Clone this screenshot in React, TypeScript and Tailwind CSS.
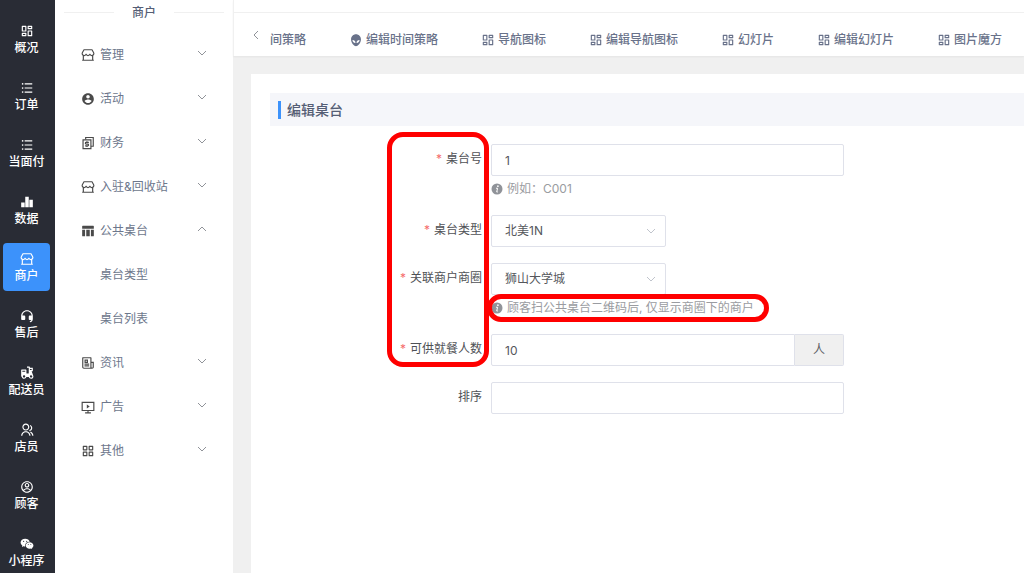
import React, { useState } from 'react';
import type { IconType } from 'react-icons';
import {
    RiAccountCircleFill,
    RiAccountCircleLine,
    RiAliensFill,
    RiBarChart2Fill,
    RiCustomerServiceFill,
    RiDashboardLine,
    RiEBike2Fill,
    RiFunctionLine,
    RiGroupLine,
    RiListUnordered,
    RiNewspaperLine,
    RiStore2Line,
    RiTableFill,
    RiWechatFill,
} from 'react-icons/ri';

type IconLike = IconType | React.FC<{ className?: string }>;

interface MenuGroup {
    label: string;
    icon: IconLike;
    children?: string[];
}

// Stacked bills with a dollar sign
const FinanceIcon: React.FC<{ className?: string }> = ({ className }) => (
    <svg viewBox="0 0 24 24" className={className} fill="none" stroke="currentColor" strokeWidth="2">
        <path d="M8 6V2.5h13v15h-4" />
        <path d="M3.5 6.5H17v15H3.5z" />
        <path d="M13.5 11H9a1.5 1.5 0 0 0 0 3h2.5a1.5 1.5 0 0 1 0 3H7M10.2 9v2M10.2 17v2" />
    </svg>
);

const ScreenIcon: React.FC<{ className?: string }> = ({ className }) => (
    <svg viewBox="0 0 24 24" className={className} fill="none" stroke="currentColor" strokeWidth="2">
        <path d="M2 4h20v14H2zM12 18v4M7 22h10" />
        <path d="M10 7.5v7l5-3.5z" fill="currentColor" stroke="none" />
    </svg>
);

const InfoIcon: React.FC<{ className?: string }> = ({ className }) => (
    <svg viewBox="0 0 24 24" className={className}>
        <circle cx="12" cy="12" r="11" fill="currentColor" />
        <circle cx="13.8" cy="6.4" r="1.7" fill="#fff" />
        <path d="M10 10.5h3.2l-1.8 7.5h2.2" fill="none" stroke="#fff" strokeWidth="2" />
    </svg>
);

const Chevron: React.FC<{ d: string; className?: string }> = ({ d, className }) => (
    <svg viewBox="0 0 10 10" className={`size-2.5 ${className ?? ''}`} fill="none" stroke="currentColor">
        <path d={d} />
    </svg>
);

const DOWN = 'M1 3l4 4 4-4';
const UP = 'M1 7l4-4 4 4';
const LEFT = 'M7 1L3 5l4 4';

const mainNav: { label: string; icon: IconLike }[] = [
    { label: '概况', icon: RiDashboardLine },
    { label: '订单', icon: RiListUnordered },
    { label: '当面付', icon: RiListUnordered },
    { label: '数据', icon: RiBarChart2Fill },
    { label: '商户', icon: RiStore2Line },
    { label: '售后', icon: RiCustomerServiceFill },
    { label: '配送员', icon: RiEBike2Fill },
    { label: '店员', icon: RiGroupLine },
    { label: '顾客', icon: RiAccountCircleLine },
    { label: '小程序', icon: RiWechatFill },
];

const menuGroups: MenuGroup[] = [
    { label: '管理', icon: RiStore2Line },
    { label: '活动', icon: RiAccountCircleFill },
    { label: '财务', icon: FinanceIcon },
    { label: '入驻&回收站', icon: RiStore2Line },
    { label: '公共桌台', icon: RiTableFill, children: ['桌台类型', '桌台列表'] },
    { label: '资讯', icon: RiNewspaperLine },
    { label: '广告', icon: ScreenIcon },
    { label: '其他', icon: RiFunctionLine },
];

const tabs: { label: string; icon?: IconLike }[] = [
    { label: '间策略' },
    { label: '编辑时间策略', icon: RiAliensFill },
    { label: '导航图标', icon: RiDashboardLine },
    { label: '编辑导航图标', icon: RiDashboardLine },
    { label: '幻灯片', icon: RiDashboardLine },
    { label: '编辑幻灯片', icon: RiDashboardLine },
    { label: '图片魔方', icon: RiDashboardLine },
];

const MainNav: React.FC = () => (
    <nav className="flex w-[55px] shrink-0 flex-col gap-[9px] overflow-hidden bg-[#292c35] pt-[15px] pr-[5px] pl-[3px]">
        {mainNav.map(({ label, icon: Icon }) => (
            <a
                key={label}
                href="#"
                className={`flex h-12 shrink-0 flex-col items-center rounded pt-[9px] text-xs leading-5 font-medium whitespace-nowrap text-white ${
                    label === '商户' ? 'bg-[#3c92fb]' : ''
                }`}
            >
                <Icon className="size-3.5 shrink-0" />
                {label}
            </a>
        ))}
    </nav>
);

const SideMenu: React.FC = () => {
    const [open, setOpen] = useState('公共桌台');

    return (
        <aside className="w-[178px] shrink-0 bg-white">
            <div className="flex h-[33px] items-start gap-[18px] px-[9px] pt-[3px] text-xs leading-5 font-medium text-[#555e75]">
                <span className="mt-[9px] h-px flex-1 bg-[#f0f0f0]" />
                商户
                <span className="mt-[9px] h-px flex-1 bg-[#f0f0f0]" />
            </div>
            <ul>
                {menuGroups.map(({ label, icon: Icon, children }) => (
                    <li key={label}>
                        <button
                            type="button"
                            onClick={() => setOpen(open === label ? '' : label)}
                            className="flex h-11 w-full items-center gap-[5px] px-[26px] text-xs text-[#6d778c]"
                        >
                            <Icon className="size-3.5 text-[#4a4a4a]" />
                            {label}
                            <Chevron d={open === label ? UP : DOWN} className="mb-1 ml-auto text-[#909399]" />
                        </button>
                        {open === label &&
                            children?.map((child) => (
                                <a key={child} href="#" className="flex h-11 items-center pl-[45px] text-xs text-[#6d778c]">
                                    {child}
                                </a>
                            ))}
                    </li>
                ))}
            </ul>
        </aside>
    );
};

const TabBar: React.FC = () => (
    <header className="border-l border-[#f0f0f0] bg-white shadow-xs">
        <div className="h-[13px] border-b border-[#f0f0f0]" />
        <div className="flex h-[43px] items-center overflow-hidden pl-[17px]">
            <button type="button" aria-label="向左" className="mr-[9px] shrink-0 text-[#909399]">
                <Chevron d={LEFT} />
            </button>
            <div className="flex gap-[43px] pt-2.5">
                {tabs.map(({ label, icon: Icon }) => (
                    <a
                        key={label}
                        href="#"
                        className="flex shrink-0 items-center gap-[3px] text-xs leading-5 font-medium whitespace-nowrap text-[#69728a]"
                    >
                        {Icon && <Icon className="size-3.5" />}
                        {label}
                    </a>
                ))}
            </div>
        </div>
    </header>
);

interface FieldProps {
    id: string;
    label: string;
    required?: boolean;
    hint?: string;
    highlightHint?: boolean;
    children: React.ReactNode;
}

const Field: React.FC<FieldProps> = ({ id, label, required, hint, highlightHint, children }) => (
    <div className="flex gap-[9px]">
        <label htmlFor={id} className="w-[212px] shrink-0 text-right text-xs leading-[30px] text-[#4f5156]">
            {required && <span className="mr-1 text-[#f56c6c]">*</span>}
            {label}
        </label>
        <div className="min-w-0 max-w-[353px] flex-1">
            {children}
            {hint && (
                <p className="relative mt-[3px] flex h-5 items-center gap-1 text-xs whitespace-nowrap text-[#9a9ca1]">
                    <InfoIcon className="size-3 shrink-0 text-[#909399]" />
                    {hint}
                    {highlightHint && (
                        <span className="absolute -top-1 -left-1 h-7 w-[282px] rounded-full border-5 border-[#ff0000]" />
                    )}
                </p>
            )}
        </div>
    </div>
);

const inputClass =
    'block h-8 w-full min-w-0 rounded-xs border border-[#dfe1ea] bg-white px-[13px] text-xs text-[#55575c] outline-none';

const SelectBox: React.FC<{ id: string; value: string }> = ({ id, value }) => (
    <div className="relative w-[175px]">
        <select id={id} defaultValue={value} className={`${inputClass} appearance-none`}>
            <option>{value}</option>
        </select>
        <Chevron d={DOWN} className="pointer-events-none absolute top-[11px] right-2.5 text-[#c0c4cc]" />
    </div>
);

const TableForm: React.FC = () => (
    <form className="relative flex flex-col gap-4 pt-[18px]">
        <Field id="table-no" label="桌台号" required hint="例如：C001">
            <input id="table-no" defaultValue="1" className={inputClass} />
        </Field>
        <Field id="table-type" label="桌台类型" required>
            <SelectBox id="table-type" value="北美1N" />
        </Field>
        <Field id="district" label="关联商户商圈" required hint="顾客扫公共桌台二维码后, 仅显示商圈下的商户" highlightHint>
            <SelectBox id="district" value="狮山大学城" />
        </Field>
        <Field id="seats" label="可供就餐人数" required>
            <div className="flex">
                <input id="seats" defaultValue="10" className={`${inputClass} rounded-r-none`} />
                <span className="flex w-[49px] shrink-0 items-center justify-center rounded-r-xs border border-l-0 border-[#dfe1ea] bg-[#f0f0f0] text-xs text-[#606266]">
                    人
                </span>
            </div>
        </Field>
        <Field id="sort" label="排序">
            <input id="sort" className={inputClass} />
        </Field>
        {/* Marks the required fields */}
        <div className="pointer-events-none absolute top-1.5 left-[117px] h-[235px] w-[102px] rounded-2xl border-5 border-[#ff0000]" />
    </form>
);

const App: React.FC = () => (
    <div className="flex h-screen overflow-hidden bg-[#f0f0f0] font-['Inter','Noto_Sans_CJK_SC',sans-serif]">
        <MainNav />
        <SideMenu />
        <div className="flex min-w-0 flex-1 flex-col">
            <TabBar />
            <main className="mt-[18px] ml-[18px] flex-1 bg-white pt-[19px] pl-[19px]">
                <h1 className="flex h-[33px] items-center gap-1.5 bg-[#f5f6fa] pl-2 text-sm font-medium text-[#555e75]">
                    <span className="h-[18px] w-[3px] bg-[#3c92fb]" />
                    编辑桌台
                </h1>
                <TableForm />
            </main>
        </div>
    </div>
);

export default App;
